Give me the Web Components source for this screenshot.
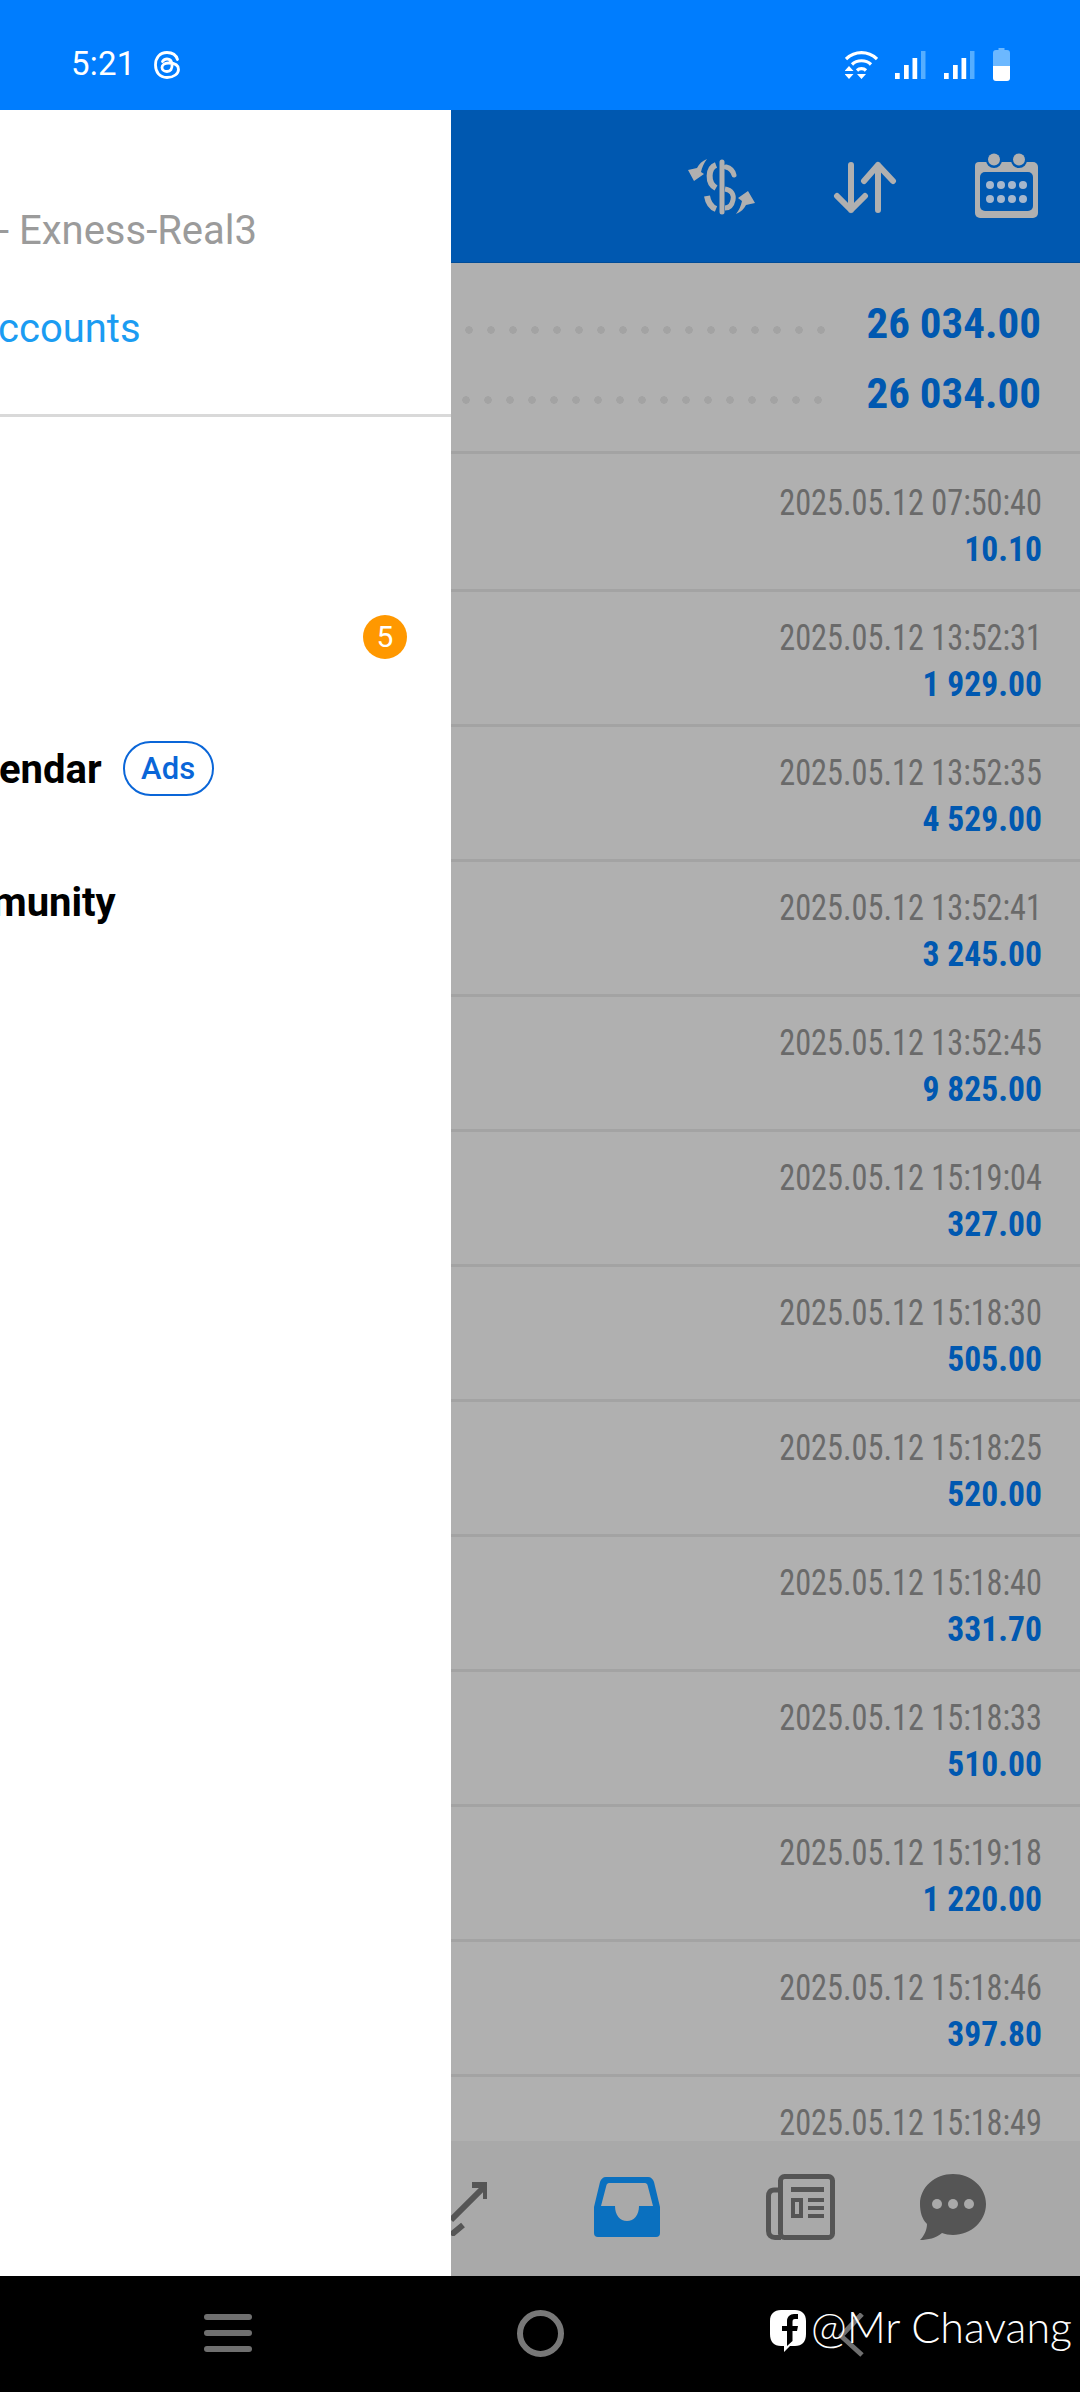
<!DOCTYPE html>
<html lang="en"><head><meta charset="utf-8"><title>Journal</title>
<style>
html,body{margin:0;padding:0;background:#000}
body{width:1080px;height:2392px;overflow:hidden;font-family:Roboto,"Liberation Sans",sans-serif}
</style></head><body>
<app-shell>
  <status-bar></status-bar>
  <main-area>
    <app-drawer></app-drawer>
    <history-panel>
      <trade-row><span slot="date">2025.05.12 07:50:40</span><span slot="amount">10.10</span></trade-row>
      <trade-row><span slot="date">2025.05.12 13:52:31</span><span slot="amount">1 929.00</span></trade-row>
      <trade-row><span slot="date">2025.05.12 13:52:35</span><span slot="amount">4 529.00</span></trade-row>
      <trade-row><span slot="date">2025.05.12 13:52:41</span><span slot="amount">3 245.00</span></trade-row>
      <trade-row><span slot="date">2025.05.12 13:52:45</span><span slot="amount">9 825.00</span></trade-row>
      <trade-row><span slot="date">2025.05.12 15:19:04</span><span slot="amount">327.00</span></trade-row>
      <trade-row><span slot="date">2025.05.12 15:18:30</span><span slot="amount">505.00</span></trade-row>
      <trade-row><span slot="date">2025.05.12 15:18:25</span><span slot="amount">520.00</span></trade-row>
      <trade-row><span slot="date">2025.05.12 15:18:40</span><span slot="amount">331.70</span></trade-row>
      <trade-row><span slot="date">2025.05.12 15:18:33</span><span slot="amount">510.00</span></trade-row>
      <trade-row><span slot="date">2025.05.12 15:19:18</span><span slot="amount">1 220.00</span></trade-row>
      <trade-row><span slot="date">2025.05.12 15:18:46</span><span slot="amount">397.80</span></trade-row>
      <trade-row><span slot="date">2025.05.12 15:18:49</span><span slot="amount"></span></trade-row>
    </history-panel>
  </main-area>
  <system-nav></system-nav>
</app-shell>
<script>
function def(name, html){
  customElements.define(name, class extends HTMLElement{
    constructor(){super();this.attachShadow({mode:'open'}).innerHTML=html;}
  });
}
def('app-shell',`<style>:host{display:flex;flex-direction:column;width:1080px;height:2392px;overflow:hidden}</style><slot></slot>`);
def('main-area',`<style>:host{display:flex;height:2166px;overflow:hidden}</style><slot></slot>`);

def('status-bar',`<style>
:host{display:flex;align-items:center;height:110px;background:#007dfe;color:#fff;box-sizing:border-box;padding:19px 70px 0 71px;flex:none}
.t{font:400 33px/40px Roboto,sans-serif;letter-spacing:.2px;margin-top:-1px}
.th{margin-left:19px}.sp{flex:1}svg{display:block}
.w{margin-right:17px}.s{margin-right:18px}.s2{margin-right:18px}
</style>
<span class="t">5:21</span>
<svg class="th" width="26" height="28" viewBox="0 0 26 28" fill="none" stroke="#fff" stroke-width="2.8" stroke-linecap="round"><path d="M23.5 8.5C22 3.5 18 1.5 13 1.5 5.5 1.5 1.5 7 1.5 14c0 7 4 12.500 11.500 12.500 7 0 11.500-4 11.500-8 0-5-4.500-6.500-10-6.500-4 0-6.500 2-6.500 4.500S10.500 20.500 13 20.500c3.500 0 5.500-2.500 5-7.500-.5-3.500-2.500-5-5-5-2 0-3.500 1-4.500 2.500"/></svg>
<span class="sp"></span>
<svg class="w" width="33" height="28" viewBox="0 0 33 28" fill="none" stroke="#fff" stroke-width="3.200"><path d="M1 8C10 -.5 23-.5 32 8"/><path d="M7 13.500C12 8.500 21 8.500 26 13.500"/><path d="M12 19.500C14.500 17 18.500 17 21 19.500"/><path fill="#fff" stroke="none" d="M4 15l4.500 5h-9zM4 28l-4.500-5h9zM16.500 28l-4.500-5h9z"/></svg>
<svg class="s" width="31" height="28" viewBox="0 0 31 28"><path fill="#fff" d="M0 22h4.700v6H0zM9 14h4.700v14H9zM17.500 7h4.700v21h-4.700z"/><path fill="#55aeff" d="M26 0h4.500v28H26z"/></svg>
<svg class="s2" width="31" height="28" viewBox="0 0 31 28"><path fill="#fff" d="M0 22h4.700v6H0zM9 14h4.700v14H9zM17.500 7h4.700v21h-4.700z"/><path fill="#55aeff" d="M26 0h4.500v28H26z"/></svg>
<svg width="17" height="33" viewBox="0 0 17 33"><path fill="#6cb8ff" d="M5.500 0h6v2H14a3 3 0 0 1 3 3v13H0V5a3 3 0 0 1 3-3h2.500z"/><path fill="#fff" d="M0 18h17v12a3 3 0 0 1-3 3H3a3 3 0 0 1-3-3z"/></svg>`);

def('app-drawer',`<style>
:host{display:flex;flex-direction:column;width:451px;height:100%;background:#fff;flex:none;overflow:hidden;font-family:Roboto,sans-serif}
.head{height:307px;box-sizing:border-box;border-bottom:3px solid #d9d9d9;padding-top:98px}
.acc{font-size:40px;line-height:46px;color:#9b9b9b;margin-left:-2px;white-space:nowrap}
.link{font-size:40px;line-height:46px;color:#1b9cf2;margin-top:52px;margin-left:-2px;white-space:nowrap}
.menu{display:flex;flex-direction:column;padding-top:153px}
.row{height:133px;display:flex;align-items:center;font-size:40px;font-weight:700;color:#000;position:relative;white-space:nowrap}
.badge{margin-left:auto;margin-right:44px;width:44px;height:44px;border-radius:50%;background:#ff9800;color:#fff;font-size:30px;font-weight:400;display:flex;align-items:center;justify-content:center}
.ads{margin-left:21px;margin-top:-2px;width:91px;height:55px;box-sizing:border-box;border:2.500px solid #0a66d8;border-radius:28px;color:#0a66d8;font-size:31px;font-weight:500;display:flex;align-items:center;justify-content:center}
.e{margin-left:-1px}.m{margin-left:-8px}
</style>
<div class="head"><div class="acc">- Exness-Real3</div><div class="link">ccounts</div></div>
<div class="menu">
 <div class="row"><span class="badge">5</span></div>
 <div class="row"><span class="e">endar</span><span class="ads">Ads</span></div>
 <div class="row"><span class="m">munity</span></div>
</div>`);

def('summary-row',`<style>
:host{display:flex;align-items:center;height:70px;color:#0058b0}
.d{flex:1;height:8px;margin-top:14px;background:radial-gradient(circle at 18px 4px,#a3a3a3 3.500px,transparent 4px) right var(--off,0px) top 0/22px 8px repeat-x}
.v{font:700 43px/70px Roboto,"Liberation Sans",sans-serif;font-stretch:75%;width:178px;margin-left:38px;text-align:right;white-space:nowrap}
</style><span class="d"></span><span class="v"><slot></slot></span>`);

def('trade-row',`<style>
:host{display:block;height:135px;box-sizing:border-box;padding:22px 38px 0 0;border-bottom:3px solid #a3a3a3;text-align:right;white-space:nowrap;flex:none}
.d{font:400 37px/47px Roboto,"Liberation Sans",sans-serif;font-stretch:75%;color:#6a6a6a;transform:scaleX(.873);transform-origin:100% 50%}
.a{font:700 35px/48px Roboto,"Liberation Sans",sans-serif;font-stretch:75%;color:#0058b0;transform:scaleX(.96);transform-origin:100% 50%}
</style><div class="d"><slot name="date"></slot></div><div class="a"><slot name="amount"></slot></div>`);

def('history-panel',`<style>
:host{display:flex;flex-direction:column;flex:1;min-width:0;background:#b0b0b0;height:100%;overflow:hidden}
.top{height:153px;flex:none;background:#0058b0;display:flex;align-items:center;border-bottom:1px solid #004c98;box-sizing:border-box;padding-top:4px}
.top svg{display:block;flex:none}
.sum{height:191px;flex:none;box-sizing:border-box;padding:25px 39px 0 0;border-bottom:3px solid #a3a3a3;display:flex;flex-direction:column}
.list{flex:1;min-height:0;overflow:hidden;display:flex;flex-direction:column;padding-top:3px}
</style>
<div class="top">
 <svg style="margin-left:237px;margin-top:-2px" width="67" height="56" viewBox="0 0 67 56" fill="none" stroke="#b0b0b0" stroke-linecap="round">
  <path stroke-width="5" d="M34 3V53"/>
  <path stroke-width="6" stroke-linecap="butt" d="M28 6C20 9 19 24 28 29"/>
  <path stroke-width="5" d="M38 8C42 9 45 12 46 16"/>
  <path stroke-width="5" stroke-linecap="butt" d="M37 30C44 31 46 36 45 41 44 46 41 49 37 49"/>
  <path stroke-width="6" stroke-linecap="butt" d="M19 37C20 43 23 48 28 50"/>
  <path fill="#b0b0b0" stroke="none" d="M19 0C14 2 11 5 9 9L0 11 6 22 16 15 13 13C14 8 16 4 19 0ZM48 55C53 53 56 50 58 46L67 44 60 32 50 39 54 42C53 47 51 51 48 55Z"/>
 </svg>
 <svg style="margin-left:78px" width="64" height="54" viewBox="0 0 64 54" fill="none" stroke="#b0b0b0" stroke-width="6" stroke-linecap="round" stroke-linejoin="round">
  <path d="M18 4V49M4 35 18 49 32 35M45 49V4M31 20 45 4 60 20"/>
 </svg>
 <svg style="margin-left:78px;margin-top:-4px" width="64" height="66" viewBox="0 0 64 66">
  <path fill="#b0b0b0" d="M4 9H58a5 5 0 0 1 5 5V60a5 5 0 0 1-5 5H5a5 5 0 0 1-5-5V13a4 4 0 0 1 4-4z"/>
  <rect x="5" y="19" width="53" height="39" rx="5" fill="#0058b0"/>
  <circle cx="19" cy="7" r="8" fill="#0058b0"/><circle cx="44" cy="7" r="8" fill="#0058b0"/>
  <circle cx="19" cy="6.500" r="6" fill="#b0b0b0"/><circle cx="44" cy="6.500" r="6" fill="#b0b0b0"/>
  <g fill="#a6b7cc"><circle cx="15" cy="32" r="4"/><circle cx="26" cy="32" r="4"/><circle cx="37" cy="32" r="4"/><circle cx="48" cy="32" r="4"/><circle cx="15" cy="46" r="4"/><circle cx="26" cy="46" r="4"/><circle cx="37" cy="46" r="4"/><circle cx="48" cy="46" r="4"/></g>
 </svg>
</div>
<div class="sum"><summary-row>26 034.00</summary-row><summary-row style="--off:3px">26 034.00</summary-row></div>
<div class="list"><slot></slot></div>
<bottom-nav></bottom-nav>`);

def('bottom-nav',`<style>
:host{display:flex;align-items:center;height:135px;flex:none;background:#a9a9a9}
svg{display:block;flex:none}
</style>
<svg style="margin-right:107px" width="36" height="54" viewBox="0 0 36 54" fill="none" stroke="#555" stroke-width="6"><path d="M34 4 0 38M12 43 0 53M21 3H35V17"/></svg>
<svg style="margin-right:106px;margin-top:-4px" width="66" height="60" viewBox="0 0 66 60"><path fill="#0a70bf" fill-rule="evenodd" d="M12 0H54C57 0 59 2 60 5L66 30V56a4 4 0 0 1-4 4H4a4 4 0 0 1-4-4V30L6 5C7 2 9 0 12 0ZM15 6C13.500 6 13 7 12.500 8L7 29H21C21 38 26 44 33 44S45 38 45 29H59L53.500 8C53 7 52.500 6 51 6Z"/></svg>
<svg style="margin-right:85px;margin-top:-4px" width="69" height="66" viewBox="0 0 69 66" fill="none" stroke="#555" stroke-width="5"><rect x="14.500" y="2.500" width="52" height="61" rx="4"/><path d="M14 16H8C4 16 2.500 19 2.500 22V57C2.500 61 5 63.500 9 63.500H15"/><path stroke-width="5" d="M25 15.500H58"/><rect x="27" y="26" width="8" height="16" stroke-width="4"/><path stroke-width="4" d="M42 26H58M42 34H58M42 42H58"/></svg>
<svg style="margin-top:-4px" width="66" height="66" viewBox="0 0 66 66"><path fill="#555" d="M33 0C51 0 66 13 66 30S51 61 33 61C29 61 25 60 22 59 16 64 8 66 0 66 4 62 7 56 7 50 2 45 0 38 0 30 0 13 15 0 33 0Z"/><g fill="#a9a9a9"><circle cx="17" cy="30" r="5"/><circle cx="33" cy="30" r="5"/><circle cx="49" cy="30" r="5"/></g></svg>`);

def('system-nav',`<style>
:host{display:flex;align-items:center;height:116px;background:#000;flex:none;position:relative;padding-left:204px;box-sizing:border-box}
svg{display:block;flex:none}
.wm{position:absolute;left:770px;top:34px;display:flex;align-items:center;color:#fff;font:300 43px/50px Lato,sans-serif;white-space:nowrap}
.mag{position:absolute;left:838px;top:37px}
</style>
<svg style="margin-top:-2px" width="48" height="38" viewBox="0 0 48 38" fill="#6f6f6f"><rect width="48" height="6" rx="3" y="0"/><rect width="48" height="6" rx="3" y="16"/><rect width="48" height="6" rx="3" y="32"/></svg>
<svg style="margin-left:265px;margin-top:-2px" width="47" height="47" viewBox="0 0 47 47"><circle cx="23.500" cy="23.500" r="20.500" fill="none" stroke="#787878" stroke-width="6"/></svg>
<svg class="mag" width="26" height="44" viewBox="0 0 26 44" fill="none" stroke="#6f6f6f" stroke-width="5"><path d="M24 1 2 24M2 22 24 42"/></svg>
<div class="wm"><svg width="36" height="42" viewBox="0 0 36 42"><path fill="#fff" d="M11 0H25C32 0 36 4 36 11V24C36 32 32 36 25 36H20L14 42V36H11C4 36 0 32 0 24V11C0 4 4 0 11 0Z"/><path fill="#000" d="M17 36V21H12V16H17V11C17 7 20 4 24 4H28V9H25C23 9 22.500 10 22.500 12V16H28L27 21H22.500V31Z"/></svg><span style="margin-left:5px;margin-top:-8px">@Mr Chavang</span></div>`);
</script>
</body></html>
